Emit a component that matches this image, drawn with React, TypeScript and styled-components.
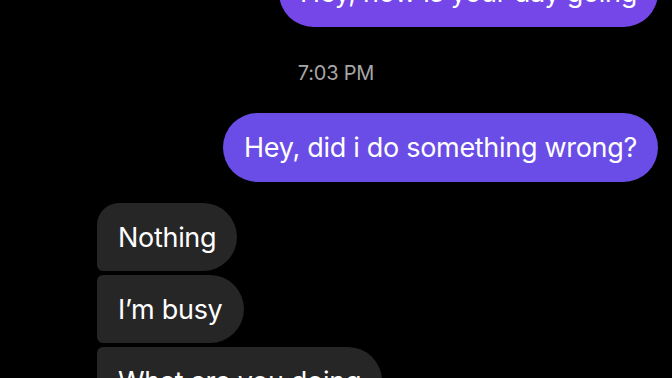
import React from 'react';
import styled, { createGlobalStyle } from 'styled-components';

const GlobalStyle = createGlobalStyle`
  html, body {
    margin: 0;
    padding: 0;
    background: #000;
  }
  body {
    font-family: Inter, "Noto Sans", "Liberation Sans", sans-serif;
    -webkit-font-smoothing: antialiased;
  }
`;

const Screen = styled.div`
  width: 672px;
  height: 378px;
  overflow: hidden;
  background: #000;
`;

const Thread = styled.div`
  display: flex;
  flex-direction: column;
  margin-top: -42px;
`;

const Bubble = styled.div<{ $mine?: boolean; $pos?: 'first' | 'middle' | 'last' }>`
  align-self: ${({ $mine }) => ($mine ? 'flex-end' : 'flex-start')};
  height: ${({ $mine }) => ($mine ? '69px' : '68px')};
  margin-right: ${({ $mine }) => ($mine ? '14px' : '0')};
  margin-left: ${({ $mine }) => ($mine ? '0' : '97px')};
  padding: 0 21px;
  box-sizing: border-box;
  display: flex;
  align-items: center;
  font-size: 27px;
  letter-spacing: -0.3px;
  color: #fff;
  white-space: nowrap;
  background: ${({ $mine }) => ($mine ? '#6a4de6' : '#262626')};
  border-radius: ${({ $mine, $pos }) => {
    if ($mine) return '34.5px';
    if ($pos === 'first') return '22px 34px 34px 6px';
    if ($pos === 'middle') return '6px 34px 34px 6px';
    return '6px 34px 34px 22px';
  }};
  margin-top: ${({ $mine, $pos }) => ($mine || $pos === 'first' ? '0' : '4px')};
`;

const TopSent = styled(Bubble)`
  background: #7547e8;
`;

const Stamp = styled.div`
  align-self: center;
  margin: 33px 0 26px 0;
  font-size: 20px;
  line-height: 27px;
  color: #a6a6a6;
  letter-spacing: -0.2px;
`;

const Gap = styled.div`
  height: 21px;
`;

export default function App() {
  return (
    <>
      <GlobalStyle />
      <Screen>
        <Thread>
          <TopSent $mine>Hey, how is your day going</TopSent>
          <Stamp>7:03 PM</Stamp>
          <Bubble $mine>Hey, did i do something wrong?</Bubble>
          <Gap />
          <Bubble $pos="first">Nothing</Bubble>
          <Bubble $pos="middle">I’m busy</Bubble>
          <Bubble $pos="middle">What are you doing</Bubble>
        </Thread>
      </Screen>
    </>
  );
}
